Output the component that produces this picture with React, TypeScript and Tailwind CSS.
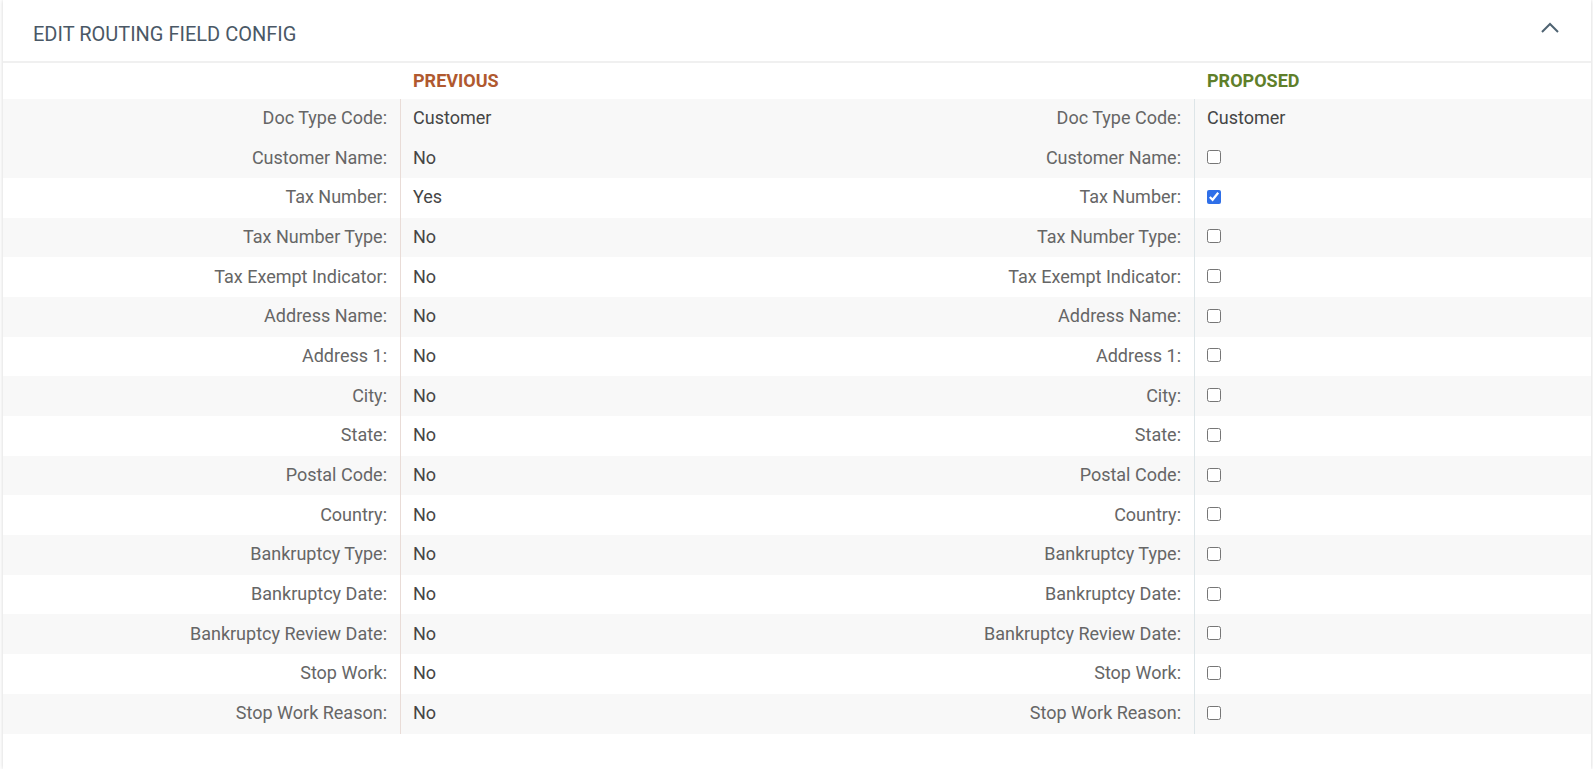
import React from "react";

const rows: { label: string; prev: string; checked: boolean | null; proposedText?: string; gray: boolean }[] = [
  { label: "Doc Type Code:", prev: "Customer", checked: null, proposedText: "Customer", gray: true },
  { label: "Customer Name:", prev: "No", checked: false, gray: true },
  { label: "Tax Number:", prev: "Yes", checked: true, gray: false },
  { label: "Tax Number Type:", prev: "No", checked: false, gray: true },
  { label: "Tax Exempt Indicator:", prev: "No", checked: false, gray: false },
  { label: "Address Name:", prev: "No", checked: false, gray: true },
  { label: "Address 1:", prev: "No", checked: false, gray: false },
  { label: "City:", prev: "No", checked: false, gray: true },
  { label: "State:", prev: "No", checked: false, gray: false },
  { label: "Postal Code:", prev: "No", checked: false, gray: true },
  { label: "Country:", prev: "No", checked: false, gray: false },
  { label: "Bankruptcy Type:", prev: "No", checked: false, gray: true },
  { label: "Bankruptcy Date:", prev: "No", checked: false, gray: false },
  { label: "Bankruptcy Review Date:", prev: "No", checked: false, gray: true },
  { label: "Stop Work:", prev: "No", checked: false, gray: false },
  { label: "Stop Work Reason:", prev: "No", checked: false, gray: true },
];

export default function App() {
  return (
    <div
      className="w-full h-[769px] bg-white overflow-hidden"
      style={{ fontFamily: "Roboto, 'Liberation Sans', sans-serif" }}
    >
      <div className="ml-[3px] w-[1588px] h-[769px] bg-white shadow-[0_0_4px_rgba(0,0,0,0.18)]">
        <div className="h-[61px] flex items-center justify-between pl-[30px] pr-[32px]">
          <span className="mt-[6px] text-[20px] text-[#4a5866]">EDIT ROUTING FIELD CONFIG</span>
          <svg width="18" height="11" viewBox="0 0 18 11" fill="none" className="mt-[-6px]">
            <path d="M1 10 L9 2 L17 10" stroke="#4f6372" strokeWidth="2" />
          </svg>
        </div>
        <div className="h-[2px] bg-[#f0f0f0]" />
        <div className="grid grid-cols-[397px_397px_397px_397px] h-[35.5px] items-center">
          <div />
          <div className="pl-[13px] text-[18px] font-bold text-[#b0592f]">PREVIOUS</div>
          <div />
          <div className="pl-[13px] text-[18px] font-bold text-[#5f7f2a]">PROPOSED</div>
        </div>
        <div>
          {rows.map((r) => (
            <div
              key={r.label}
              className={`grid grid-cols-[397px_397px_397px_397px] h-[39.7px] items-stretch text-[18px] ${r.gray ? "bg-[#f8f8f8]" : "bg-white"}`}
            >
              <div className="flex items-center justify-end pr-[13px] pb-[2px] text-[#666666]">{r.label}</div>
              <div className="flex items-center pl-[12px] pb-[2px] border-l border-[#e9dcd7] text-[#454545]">{r.prev}</div>
              <div className="flex items-center justify-end pr-[13px] pb-[2px] text-[#666666]">{r.label}</div>
              <div className="flex items-center pl-[12px] pb-[2px] border-l border-[#dde5e8] text-[#454545]">
                {r.checked === null ? (
                  r.proposedText
                ) : (
                  <input type="checkbox" readOnly checked={r.checked} className="m-0 w-[14px] h-[14px] accent-[#2f6fe8]" />
                )}
              </div>
            </div>
          ))}
        </div>
      </div>
    </div>
  );
}
